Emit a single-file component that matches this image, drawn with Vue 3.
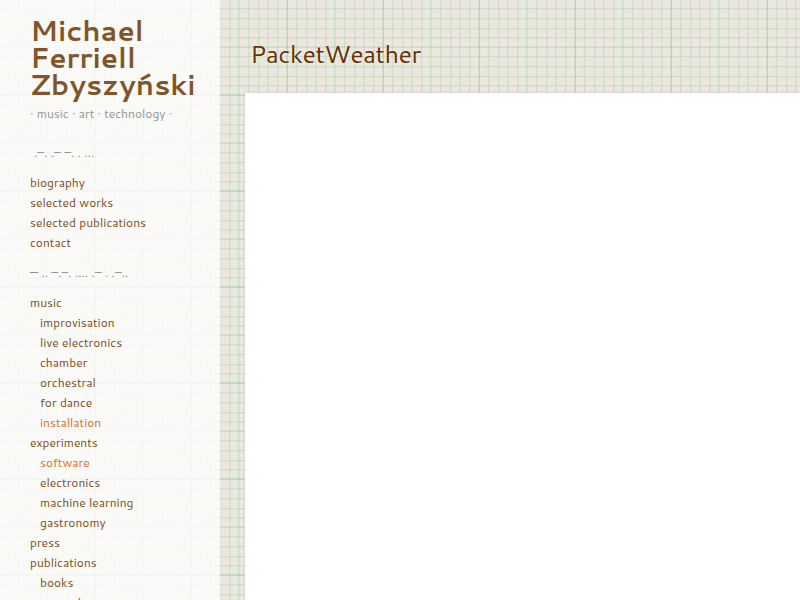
<script setup>
const xs = [8, 18, 27, 37, 56, 66, 75, 85]
const ys = [8, 18, 28, 37, 56, 66, 76, 85]
const about = ['biography', 'selected works', 'selected publications', 'contact']
const archive = [
  { t: 'music' },
  { t: 'improvisation', sub: true },
  { t: 'live electronics', sub: true },
  { t: 'chamber', sub: true },
  { t: 'orchestral', sub: true },
  { t: 'for dance', sub: true },
  { t: 'installation', sub: true, on: true },
  { t: 'experiments' },
  { t: 'software', sub: true, on: true },
  { t: 'electronics', sub: true },
  { t: 'machine learning', sub: true },
  { t: 'gastronomy', sub: true },
  { t: 'press' },
  { t: 'publications' },
  { t: 'books', sub: true },
  { t: 'general', sub: true },
]
</script>

<template>
  <div class="page">
    <svg class="paper" width="800" height="600">
      <defs>
        <filter id="grain" x="0" y="0" width="100%" height="100%">
          <feTurbulence type="fractalNoise" baseFrequency="0.25" numOctaves="2" seed="4" stitchTiles="stitch" result="n" />
          <feDiffuseLighting in="n" surfaceScale="0.5" diffuseConstant="1.13" lighting-color="#f0e8e5">
            <feDistantLight azimuth="225" elevation="62" />
          </feDiffuseLighting>
        </filter>
        <pattern id="grid" width="96" height="96" patternUnits="userSpaceOnUse">
          <rect width="96" height="96" fill="#ebe5e0" />
          <rect width="96" height="96" filter="url(#grain)" opacity="0.3" />
          <g fill="#a0d49c" fill-opacity="0.38">
            <rect v-for="x in xs" :key="'x' + x" :x="x" y="0" width="1.3" height="96" />
            <rect v-for="y in ys" :key="'y' + y" x="0" :y="y" width="96" height="1.3" />
          </g>
          <g fill="#a0d49c" fill-opacity="0.5">
            <rect x="46" width="1.4" height="96" />
            <rect y="46.4" width="96" height="1.6" />
          </g>
          <g fill="#98d294" fill-opacity="0.65">
            <rect x="94.6" width="1.4" height="96" />
            <rect y="94.2" width="96" height="1.6" />
          </g>
        </pattern>
      </defs>
      <rect width="800" height="600" fill="url(#grid)" />
    </svg>
    <aside class="side">
      <h1 class="brand">Michael<br />Ferriell<br />Zbyszyński</h1>
      <p class="tag">· music · art · technology ·</p>
      <p class="morse first">.<i>–</i>. .<i>–</i> <i>–</i>. . ...</p>
      <nav>
        <a v-for="t in about" :key="t" class="item">{{ t }}</a>
      </nav>
      <p class="morse"><i>—</i> .. <i>–</i>.<i>–</i>. .... .<i>–</i> . .<i>–</i>..</p>
      <nav>
        <a v-for="m in archive" :key="m.t" class="item" :class="{ sub: m.sub, on: m.on }">{{ m.t }}</a>
      </nav>
    </aside>
    <main class="main">
      <h2 class="title">PacketWeather</h2>
      <section class="sheet"></section>
    </main>
  </div>
</template>

<style>
body { overflow: hidden; }
</style>

<style scoped>
.page {
  position: relative;
  display: flex;
  width: 800px;
  height: 600px;
  overflow: hidden;
  font-family: Cantarell, "Noto Sans", sans-serif;
  font-size: 12px;
  line-height: 20px;
  white-space: nowrap;
}
.paper { position: absolute; left: 0; top: 0; display: block; }
.side {
  position: relative;
  box-sizing: border-box;
  flex: none;
  width: 220px;
  height: 600px;
  padding: 17px 0 0 30px;
  overflow: hidden;
  color: #7b4c20;
  background: rgba(253, 253, 251, 0.86);
}
.brand { margin: 0; font-size: 28px; line-height: 27px; font-weight: 700; color: #80552b; }
.tag { margin: 6px 0 0; color: #949494; }
.morse { height: 20px; margin: 10px 0; color: #8c8c8c; }
.morse i { font-style: normal; line-height: 1; vertical-align: 1px; }
.morse.first { margin-top: 19px; padding-left: 4px; }
.item { display: block; }
.sub { padding-left: 10px; }
.on { color: #d0721c; }
.main {
  position: relative;
  display: flex;
  flex: 1;
  flex-direction: column;
  padding-left: 25px;
}
.title {
  margin: 0;
  padding: 34px 0 19px 5px;
  font-size: 25px;
  line-height: 40px;
  font-weight: 400;
  letter-spacing: -0.55px;
  color: #663300;
  text-shadow: 0 0 2px #fff;
}
.sheet {
  flex: 1;
  background: #fff;
  box-shadow: 0 0 3px rgba(110, 90, 80, 0.22);
}
</style>
